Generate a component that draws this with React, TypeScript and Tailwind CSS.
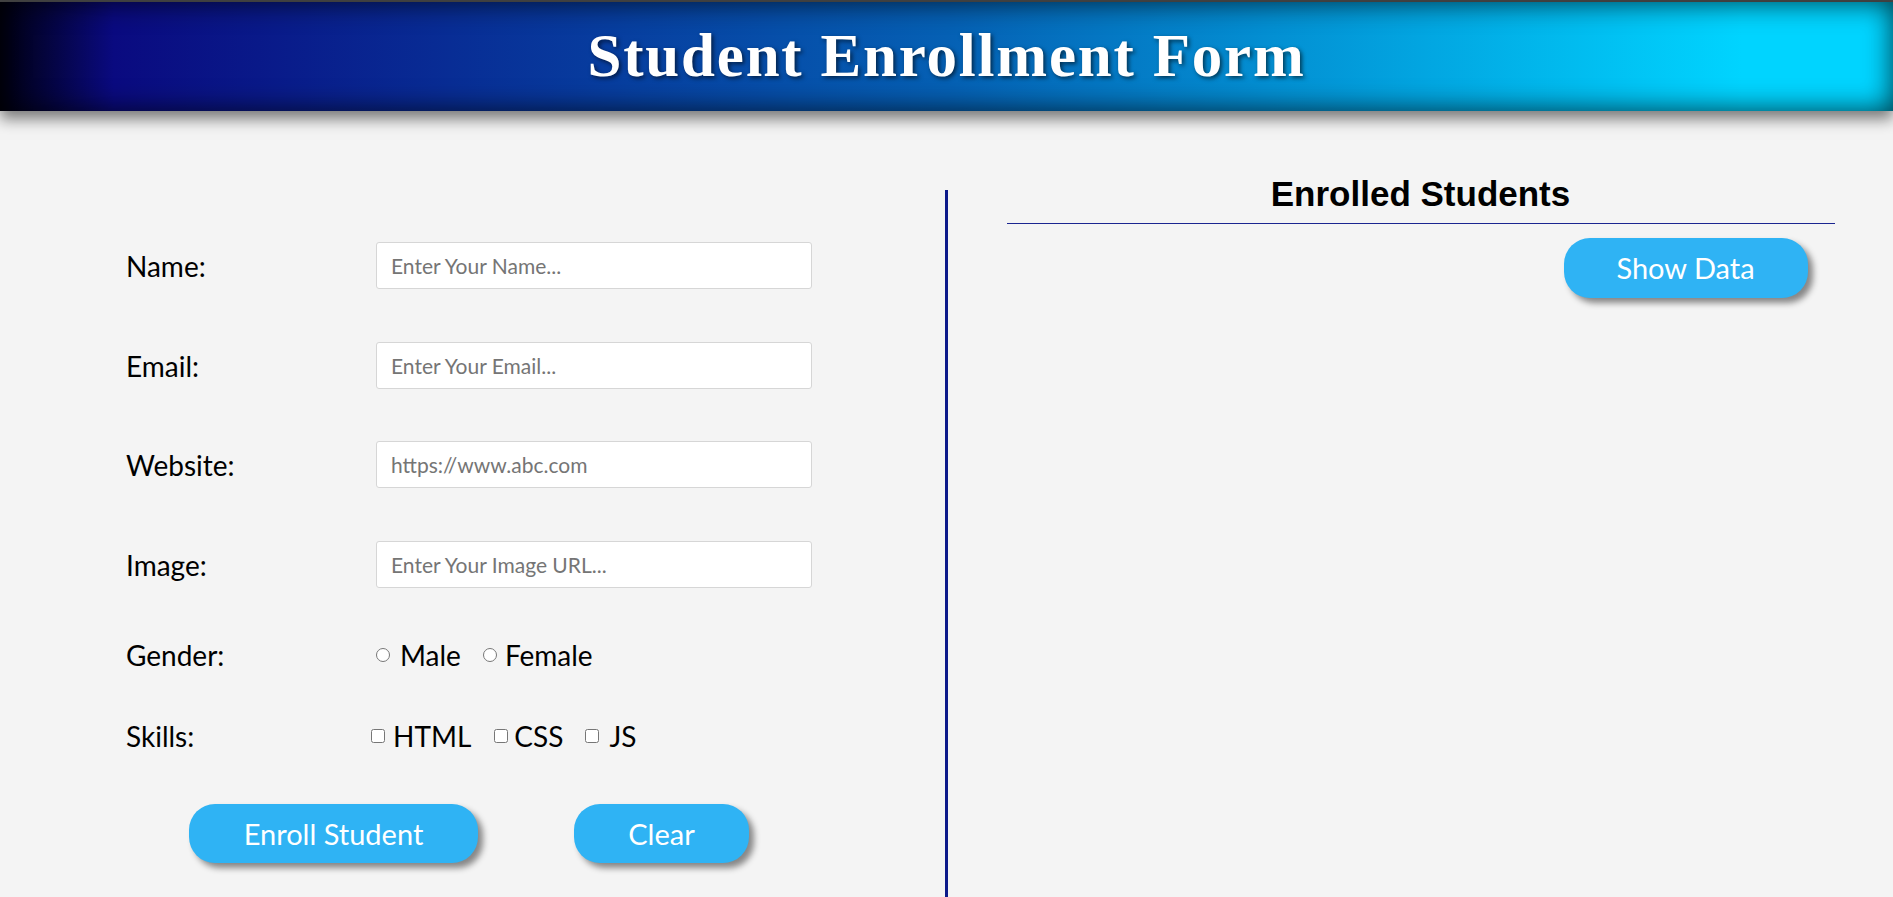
import React from 'react';

const fieldRows = [
  { label: 'Name:', placeholder: 'Enter Your Name...', mt: 'mt-[131px]' },
  { label: 'Email:', placeholder: 'Enter Your Email...', mt: 'mt-[53px]' },
  { label: 'Website:', placeholder: 'https://www.abc.com', mt: 'mt-[52px]' },
  { label: 'Image:', placeholder: 'Enter Your Image URL...', mt: 'mt-[53px]' },
];

const btn =
  'h-[59px] rounded-[26px] bg-[#2fb3f4] text-white text-[29px] shadow-[5px_5px_6px_rgba(0,0,0,0.45)] flex items-center justify-center';

const App = () => {
  return (
    <div className="min-h-[897px] flex flex-col bg-[#f4f4f4] font-['Lato',sans-serif] text-black">
      <div className="h-[2px] bg-[#444]" />

      {/* Header */}
      <header className="relative z-10 h-[109px] flex items-center justify-center bg-[linear-gradient(90deg,#000010_0%,#0a0a80_6%,#0560b4_50%,#00d4ff_92%,#00d4ff_100%)] shadow-[inset_0_0_28px_rgba(0,0,0,0.75),0_8px_14px_rgba(0,0,0,0.5)]">
        <h1 className="font-['Liberation_Serif','Times_New_Roman',serif] font-bold text-[61px] leading-none tracking-[1.8px] text-white [text-shadow:2px_2px_4px_rgba(0,0,0,0.6)] mb-[2px]">
          Student Enrollment Form
        </h1>
      </header>

      <main className="flex flex-1">
        {/* Form */}
        <section className="w-[945px] pl-[126px] flex flex-col">
          {fieldRows.map((row) => (
            <div key={row.label} className={`${row.mt} flex items-center h-[47px]`}>
              <label className="w-[250px] text-[28px]">{row.label}</label>
              <input
                type="text"
                placeholder={row.placeholder}
                className="w-[436px] h-[47px] bg-white border border-[#d6d6d6] rounded-[3px] pl-[14px] text-[21px] placeholder:text-[#757575] outline-none"
              />
            </div>
          ))}

          <div className="mt-[43px] flex items-center h-[47px]">
            <label className="w-[250px] text-[28px]">Gender:</label>
            <input type="radio" name="gender" className="w-[14px] h-[14px]" />
            <span className="ml-[10px] text-[28px]">Male</span>
            <input type="radio" name="gender" className="ml-[22px] w-[14px] h-[14px]" />
            <span className="ml-[8px] text-[28px]">Female</span>
          </div>

          <div className="mt-[34px] flex items-center h-[47px]">
            <label className="w-[245px] text-[28px]">Skills:</label>
            <input type="checkbox" className="w-[14px] h-[14px]" />
            <span className="ml-[8px] text-[28px]">HTML</span>
            <input type="checkbox" className="ml-[23px] w-[14px] h-[14px]" />
            <span className="ml-[6px] text-[28px]">CSS</span>
            <input type="checkbox" className="ml-[22px] w-[14px] h-[14px]" />
            <span className="ml-[10px] text-[28px]">JS</span>
          </div>

          <div className="mt-[45px] ml-[63px] flex gap-[96px]">
            <button className={`${btn} w-[289px]`}>Enroll Student</button>
            <button className={`${btn} w-[175px]`}>Clear</button>
          </div>
        </section>

        {/* Divider */}
        <div className="mt-[79px] w-[3px] bg-[#0c1a8a]" />

        {/* Enrolled students */}
        <section className="flex-1 flex flex-col items-center">
          <div className="w-[828px] mt-[63px]">
            <h2 className="font-['Liberation_Sans',Arial,sans-serif] font-bold text-[35px] leading-[40px] text-center pb-[9px] border-b border-[#1a2590]">
              Enrolled Students
            </h2>
            <div className="flex justify-end mt-[14px] pr-[27px]">
              <button className={`${btn} w-[244px] h-[60px]`}>Show Data</button>
            </div>
          </div>
        </section>
      </main>
    </div>
  );
};

export default App;
